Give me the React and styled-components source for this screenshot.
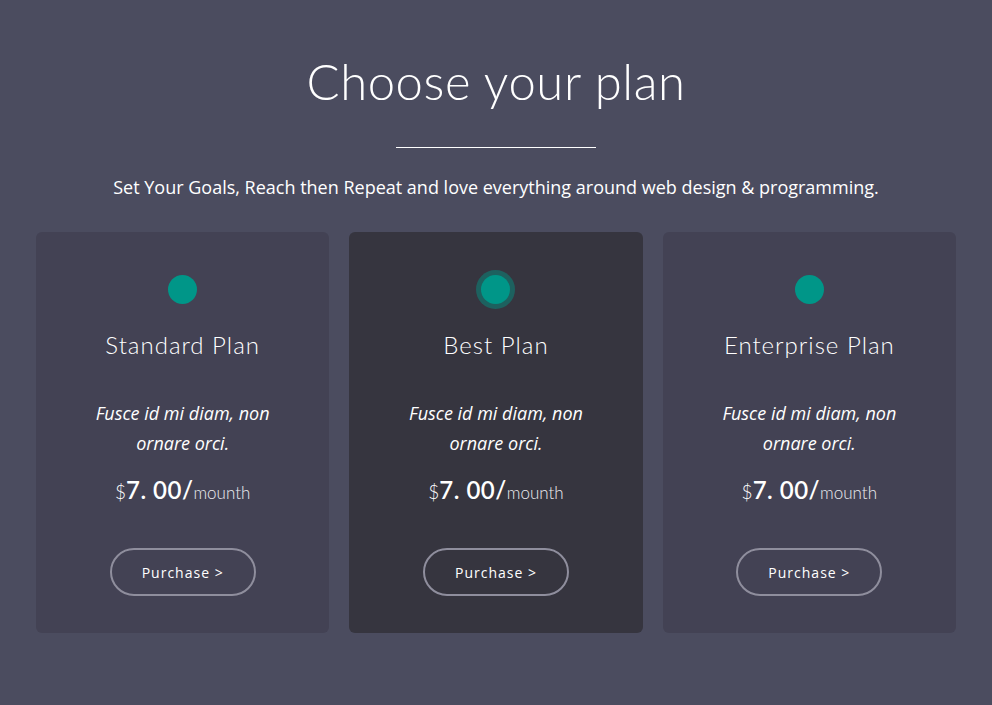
import React from "react";
import styled, {createGlobalStyle} from "styled-components";

const GlobalStyle = createGlobalStyle`
  html, body {
    margin: 0;
    padding: 0;
    background: #4b4c5f;
  }
  body {
    font-family: "Open Sans", "Liberation Sans", sans-serif;
    color: #fff;
  }
`;

const Page = styled.section`
  min-height: 705px;
  padding: 53px 36px 0;
  box-sizing: border-box;
  display: flex;
  flex-direction: column;
  align-items: center;
`;

const Title = styled.h1`
  margin: 0;
  font-family: "Lato", "Open Sans", sans-serif;
  font-weight: 300;
  font-size: 49px;
  line-height: 56px;
  letter-spacing: 0.6px;
  color: #fff;
`;

const Divider = styled.hr`
  width: 200px;
  height: 1px;
  border: 0;
  background: #fff;
  margin: 38px 0 0;
`;

const Lead = styled.p`
  margin: 27px 0 0;
  font-size: 18px;
  line-height: 24px;
  color: #fff;
`;

const Grid = styled.div`
  margin-top: 33px;
  width: 100%;
  display: grid;
  grid-template-columns: repeat(3, 1fr);
  gap: 20px;
`;

const Card = styled.div`
  height: 401px;
  border-radius: 6px;
  background: ${p => (p.$featured ? "#36353f" : "#434254")};
  display: flex;
  flex-direction: column;
  align-items: center;
  padding-top: 43px;
  box-sizing: border-box;
`;

const Dot = styled.span`
  width: 29px;
  height: 29px;
  border-radius: 50%;
  background: #009688;
  box-shadow: ${p => (p.$featured ? "0 0 0 5px rgba(0, 150, 136, 0.45)" : "none")};
`;

const PlanName = styled.h2`
  margin: 26px 0 0;
  font-family: "Lato", "Open Sans", sans-serif;
  font-weight: 300;
  font-size: 24px;
  line-height: 30px;
  letter-spacing: 1px;
  color: #fff;
`;

const Blurb = styled.p`
  margin: 38px 0 0;
  width: 200px;
  text-align: center;
  font-style: italic;
  font-size: 18px;
  line-height: 30px;
  color: #fff;
`;

const Price = styled.div`
  margin-top: 17px;
  display: flex;
  align-items: baseline;
  font-family: "Lato", "Open Sans", sans-serif;
  color: #fff;
`;

const Currency = styled.span`
  font-size: 19px;
  font-weight: 300;
`;

const Amount = styled.span`
  font-size: 24px;
  font-weight: 600;
  letter-spacing: 0.5px;
`;

const Period = styled.span`
  font-size: 17px;
  font-weight: 300;
  color: #ececf0;
`;

const Button = styled.button`
  margin-top: 44px;
  width: 146px;
  height: 48px;
  border-radius: 24px;
  border: 2px solid #8f8e9d;
  background: transparent;
  color: #fff;
  font-family: "Open Sans", "Liberation Sans", sans-serif;
  font-size: 14px;
  letter-spacing: 1px;
  cursor: pointer;
`;

const plans = [
    {name: "Standard Plan"},
    {name: "Best Plan", featured: true},
    {name: "Enterprise Plan"},
];

const App = () => {
    return <>
        <GlobalStyle/>
        <Page>
            <Title>Choose your plan</Title>
            <Divider/>
            <Lead>Set Your Goals, Reach then Repeat and love everything around web design &amp; programming.</Lead>
            <Grid>
                {plans.map(plan => (
                    <Card key={plan.name} $featured={plan.featured}>
                        <Dot $featured={plan.featured}/>
                        <PlanName>{plan.name}</PlanName>
                        <Blurb>Fusce id mi diam, non ornare orci.</Blurb>
                        <Price>
                            <Currency>$</Currency>
                            <Amount>7. 00/</Amount>
                            <Period>mounth</Period>
                        </Price>
                        <Button>Purchase &gt;</Button>
                    </Card>
                ))}
            </Grid>
        </Page>
    </>
};

export default App;
